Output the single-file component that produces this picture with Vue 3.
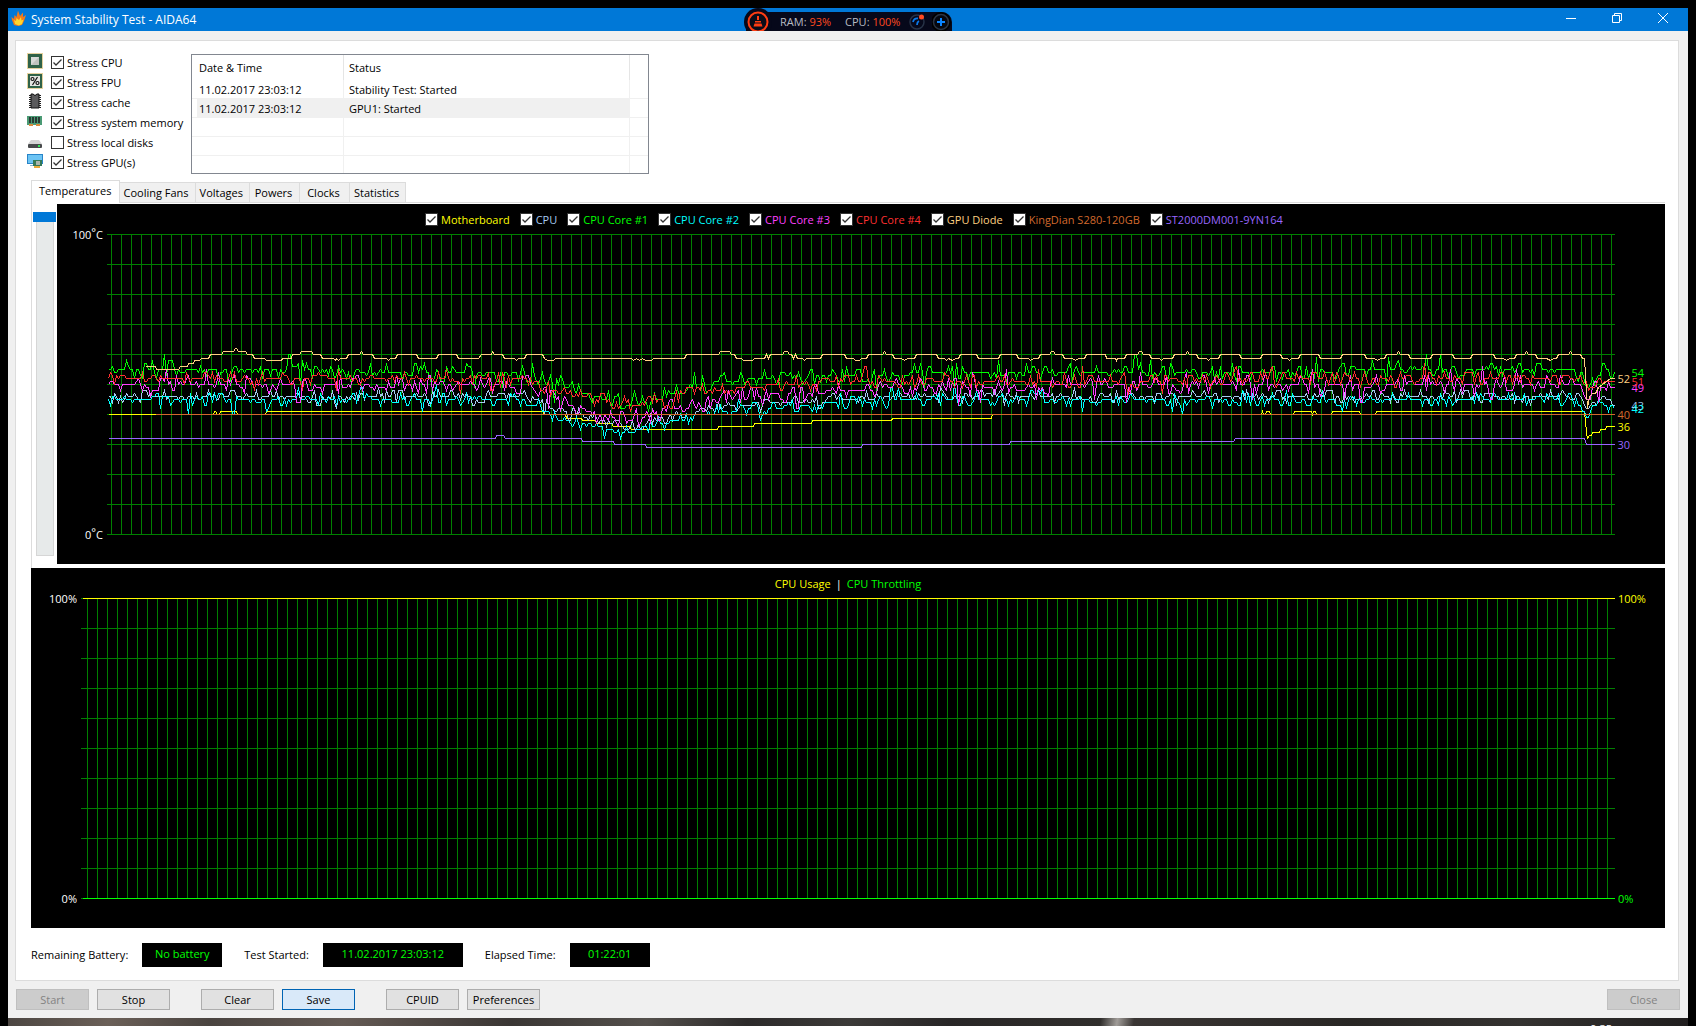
<script setup>
import { reactive, ref } from 'vue'

const stress = reactive([
  { id: 'cpu', label: 'Stress CPU', on: true },
  { id: 'fpu', label: 'Stress FPU', on: true },
  { id: 'cache', label: 'Stress cache', on: true },
  { id: 'mem', label: 'Stress system memory', on: true },
  { id: 'disk', label: 'Stress local disks', on: false },
  { id: 'gpu', label: 'Stress GPU(s)', on: true }
])

const log = [
  { time: '11.02.2017 23:03:12', status: 'Stability Test: Started' },
  { time: '11.02.2017 23:03:12', status: 'GPU1: Started' },
  {}, {}, {}
]

const tabs = ['Temperatures', 'Cooling Fans', 'Voltages', 'Powers', 'Clocks', 'Statistics']
const activeTab = ref('Temperatures')
const scroll = ref(100)

const PLOT_W = 1508
const LEFT = 107
const vLines = Array.from({ length: 151 }, (_, i) => 4 + i * 10)
const vLinesUsage = Array.from({ length: 153 }, (_, i) => 6 + i * 10)
const hLines = Array.from({ length: 11 }, (_, i) => i * 30)

const px = (x) => x - LEFT + 0.5
const py = (t) => Math.round(300 - t * 3) + 0.5

// "x:temp" pairs, whitespace separated
function track(text) {
  return text.trim().split(/\s+/).map((p) => {
    const [x, t] = p.split(':').map(Number)
    return `${px(x)},${py(t)}`
  }).join(' ')
}

// Sensor jitter around a piecewise-linear baseline
function jitter(seed, base, spread) {
  let s = seed
  const rnd = () => {
    s = (s * 1664525 + 1013904223) % 4294967296
    return s / 4294967296
  }
  const knots = base.trim().split(/\s+/).map((p) => p.split(':').map(Number))
  const at = (x) => {
    for (let i = 1; i < knots.length; i++) {
      if (x <= knots[i][0]) {
        const [x0, a] = knots[i - 1]
        const [x1, b] = knots[i]
        return a + (b - a) * (x - x0) / (x1 - x0)
      }
    }
    return knots[knots.length - 1][1]
  }
  const out = []
  let off = 0
  for (let x = 108; x <= 1612; x += 2) {
    const r = rnd()
    if (r < 0.3) off = 0
    else if (r < 0.76) off = Math.round((rnd() - 0.5) * spread)
    else if (r < 0.84) off = Math.round((rnd() - 0.5) * spread * 2)
    out.push(`${px(x)},${py(Math.round(at(x) + off))}`)
  }
  out.push(`${px(1614)},${py(knots[knots.length - 1][1])}`)
  return out.join(' ')
}

const gold = `145:56 155:56 156:55 178:55 180:56 187:56 188:57 193:57 194:58 199:58 201:58.7 208:58.7 210:60 221:60 223:61 233:61 235:62 236:62 238:61 245:61 247:60 252:60 254:58.7 264:58.7 266:58 281:58 282:58.7 291:58.7 292:60 299:60 301:61 311:61 313:60 320:60 322:58.7 333:58.7 335:58 336:58.7 338:58 340:58.7 346:58.7 348:60 359:60 361:61 363:60 372:60 374:58.7 386:58.7 388:58 390:58.7 395:58.7 397:60 416:60 418:58.7 436:58.7 438:60 456:60 458:58.7 478:58.7 481:60 491:60 492:61 494:60 502:60 504:58.7 514:58.7 516:58 518:58.7 524:58.7 526:60 542:60 544:58.7 547:58 553:58 555:58.7
631:58.7 633:58 636:58.7 639:58 642:58.7 645:58 651:58 653:58.7 684:58.7 686:60 718:60 720:61 729:61 731:60 734:60 736:58.7 741:58.7 743:58 752:58 754:58.7 764:58.7 766:60 768:58.7 770:60 782:60 784:61 787:61 789:60 791:60 793:58.7 795:60 797:58.7 802:58.7 804:58 806:58.7 820:58.7 822:60 844:60 846:58.7 853:58.7 855:58 859:58 861:58.7 866:58.7 868:60 882:60 884:61 886:60 892:60 894:58.7 901:58.7 904:58 907:58.7 914:58.7 916:60 936:60 938:58.7 944:58.7 946:58 948:58.7 952:58 955:58.7 958:58.7 960:60 976:60 978:58.7 998:58.7 1000:60 1016:60 1018:58.7 1028:58.7 1030:58 1033:58.7 1038:58.7 1040:60 1049:60 1051:61 1053:61 1055:60 1062:60 1064:58.7 1072:58.7 1075:58 1078:58.7 1084:58.7 1086:60 1105:60
1106:58.7 1115:58.7 1116:58 1117:58.7 1124:58.7 1126:60 1137:60 1139:61 1141:61 1143:60 1149:60 1151:58.7 1159:58.7 1161:58 1163:58.7 1172:58.7 1174:60 1185:60 1187:61 1189:60 1196:60 1198:58.7 1206:58.7 1208:58 1210:58.7 1218:58.7 1220:60 1239:60 1241:58.7 1260:58.7 1262:60 1280:60 1282:58.7 1287:58.7 1289:58 1291:58.7 1298:58.7 1300:60 1318:60 1320:58.7 1340:58.7 1342:60 1364:60 1366:58.7 1374:58.7 1377:58 1380:58.7 1384:58.7 1386:60 1396:60 1398:61 1400:60 1408:60 1410:58.7 1430:58.7 1432:60 1452:60 1454:58.7 1470:58.7 1472:60 1493:60 1495:58.7 1503:58.7 1506:58 1509:58.7 1514:58.7 1516:60 1524:60 1526:61 1528:60 1535:60 1537:58.7 1546:58.7 1550:58 1553:58.7 1556:58.7 1558:60 1568:60 1570:61 1572:60 1580:60 1582:58.7 1584:58.7 1587:42 1589:46 1592:47 1595:47 1598:49 1602:50 1606:51 1610:52 1614:52`

const yellow = `108:40 213:40 214:41 215:41 217:40 219:40 220:41 236:41 237:40 265:40 266:41 542:41 544:40 565:40 566:38.7 581:38.7 582:38 595:38 596:37 611:37 613:36 629:36 631:35 717:35 718:36 753:36 754:37 811:37 812:38 891:38 892:38.7 991:38.7 992:40 1261:40 1262:41 1263:40 1265:40 1266:41 1269:41 1270:40 1293:40 1294:41 1311:41 1312:40 1313:41 1315:41 1316:40 1331:40 1332:41 1359:41 1360:40 1375:40 1376:41 1584:41 1586:34 1587:32 1589:33 1591:33 1592:34 1599:34 1600:35 1605:35 1606:36 1614:36`

const purple = `108:32 495:32 496:33 503:33 505:32 581:32 582:31 613:31 614:30 645:30 646:29 861:29 862:30 1009:30 1010:31 1233:31 1235:32 1584:32 1586:30 1614:30`

const sensors = reactive([
  { label: 'Motherboard', color: '#ffff00', on: true, now: 36, points: track(yellow) },
  { label: 'CPU', color: '#a6caf0', on: true, now: 43, outer: true,
    points: jitter(11, '108:46 530:46 560:41 600:38 630:36 660:39 700:41 730:43 800:44 900:46 1580:46 1587:41 1592:44 1604:46 1615:43', 4) },
  { label: 'CPU Core #1', color: '#00ff00', on: true, now: 54, outer: true,
    points: jitter(29, '108:55 530:54 545:51 565:49 585:47 630:43 650:44 680:48 720:51 760:52 860:53 960:54 1100:54 1580:55 1587:49 1592:52 1615:54', 6) },
  { label: 'CPU Core #2', color: '#00ffff', on: true, now: 42, outer: true,
    points: jitter(47, '108:45 530:45 560:38 600:36 625:34 660:37 700:40 730:41 800:43 900:45 1580:45 1587:38 1592:43 1604:44 1615:42', 5) },
  { label: 'CPU Core #3', color: '#ff40ff', on: true, now: 49, outer: true,
    points: jitter(61, '108:50 530:50 545:47 560:44 600:40 630:38 660:41 700:44 730:46 800:47 900:49 1000:49 1100:50 1580:50 1587:45 1592:49 1615:49', 6) },
  { label: 'CPU Core #4', color: '#ff3030', on: true, now: 51, outer: true,
    points: jitter(83, '108:52 530:52 545:49 560:47 600:45 635:43 660:45 680:47 720:48 780:50 860:51 1580:52 1587:49 1592:50 1615:51', 5) },
  { label: 'GPU Diode', color: '#ffd080', on: true, now: 52, points: track(gold) },
  { label: 'KingDian S280-120GB', color: '#d2692d', on: true, now: 40, points: track('155:40 1614:40') },
  { label: 'ST2000DM001-9YN164', color: '#9966ff', on: true, now: 30, points: track(purple) }
])

const labelTop = (t) => ({ top: 331 - t * 3 + 'px' })
</script>

<template>
  <div class="desktop">
    <main class="window">
      <header class="titlebar">
        <svg class="flame" viewBox="0 0 16 16" width="16" height="16">
          <path d="M3 15 1 10l-.5-3L3 9l.5-4L5.500 7 7 .5 9 6l3-3.500L12 7l3-2-2 6-2 4-4 1z" fill="#f47a18" />
          <path d="M4 14 3 10l2 1 .5-3L8 10l2-3 .5 3.500 2-1L11 14l-3 1.500z" fill="#ffd82e" />
        </svg>
        <h1>System Stability Test - AIDA64</h1>
        <div class="gadget">
          <svg class="gadget-clean" viewBox="0 0 28 24" width="28" height="24">
            <circle cx="14" cy="14" r="14" fill="#06081a" />
            <circle cx="14" cy="14" r="9.500" fill="#0a0c18" stroke="#ff3d12" stroke-width="2" />
            <path d="M13 8h2v4h-2zM11 13h6v1.500h-6zM10.500 15.500h7l1 3h-9z" fill="#ff3d12" />
          </svg>
          <span class="meter">RAM: <b>93%</b></span>
          <span class="meter">CPU: <b>100%</b></span>
          <svg class="gadget-dial" viewBox="0 0 18 18" width="18" height="18">
            <circle cx="8" cy="9" r="7" fill="none" stroke="#263246" stroke-width="1.500" />
            <path d="M4 9q1-4 5-3.500M8 12q0-3 2-4" fill="none" stroke="#0a78e8" stroke-width="1.800" />
            <circle cx="12.500" cy="4" r="2.500" fill="#ff4a20" />
          </svg>
          <svg class="gadget-plus" viewBox="0 0 20 19" width="20" height="19">
            <circle cx="9" cy="10" r="10" fill="#000" />
            <circle cx="9" cy="10" r="7.500" fill="#05070f" stroke="#2b3444" stroke-width="1.500" />
            <path d="M9 6v8M5 10h8" stroke="#0a84ff" stroke-width="2" />
          </svg>
        </div>
        <div class="controls">
          <button aria-label="Minimize"><svg viewBox="0 0 10 10" width="10" height="10"><path d="M0 5.500h10" stroke="#fff" /></svg></button>
          <button aria-label="Restore"><svg viewBox="0 0 10 10" width="10" height="10"><path d="M.5 2.500h7v7h-7zM2.500 2V.5h7v7H8" fill="none" stroke="#fff" /></svg></button>
          <button aria-label="Close window"><svg viewBox="0 0 10 10" width="10" height="10"><path d="m0 0 10 10M10 0 0 10" stroke="#fff" /></svg></button>
        </div>
      </header>

      <section class="panel">
        <div class="top">
          <ul class="stress">
            <li v-for="s in stress" :key="s.id">
              <svg viewBox="0 0 16 16" width="16" height="16">
                <template v-if="s.id === 'cpu' || s.id === 'fpu'">
                  <rect x=".5" y=".5" width="15" height="15" fill="none" stroke="#c9a23c" stroke-dasharray="1 1" />
                  <rect x="1" y="1" width="14" height="14" fill="#2f6248" />
                  <rect v-if="s.id === 'cpu'" x="4" y="4" width="8" height="8" fill="#d8dad8" />
                  <path v-if="s.id === 'cpu'" d="M4 12 12 4v8z" fill="#bfc3bf" />
                  <rect v-if="s.id === 'fpu'" x="3" y="3" width="10" height="10" fill="#e4e6e2" />
                  <g v-if="s.id === 'fpu'" fill="none" stroke="#111" stroke-width="1.200">
                    <path d="m5.500 12 5-8" /><circle cx="5.500" cy="6" r="1.500" /><circle cx="10.500" cy="10" r="1.500" />
                  </g>
                </template>
                <template v-else-if="s.id === 'cache'">
                  <path d="M2 2.500h12M2 4.500h12M2 6.500h12M2 8.500h12M2 10.500h12M2 12.500h12M2 14.500h12" stroke="#222" />
                  <path d="M4 1h2l2 1.500L10 1h2v14H4z" fill="#5a5a5c" stroke="#111" />
                </template>
                <template v-else-if="s.id === 'mem'">
                  <rect x="0" y="3" width="15" height="9" fill="#4a9a74" />
                  <path d="M2 4h2v6H2zM5 4h2v6H5zM8 4h2v6H8zM11 4h2v6h-2z" fill="#2a3a34" />
                  <path d="M2 11h4v2H2zM9 11h4v2H9z" fill="#d98a3c" />
                </template>
                <template v-else-if="s.id === 'disk'">
                  <path d="M4 7h8l3 4H1z" fill="#d4d4d4" />
                  <rect x="1" y="11" width="14" height="4" rx="1" fill="#484a4c" />
                  <rect x="11" y="12" width="2" height="2" fill="#35e85a" />
                </template>
                <template v-else>
                  <rect x=".5" y="1.500" width="15" height="9" fill="#6cc4f4" stroke="#2884c8" />
                  <path d="M3 12h4v1H3z" fill="#8ab4cc" />
                  <rect x="6" y="7" width="9" height="6" fill="#357a58" />
                  <rect x="9" y="8" width="4" height="4" fill="#a8b4ac" />
                  <path d="M7 13h6v2H7z" fill="#e8a838" />
                </template>
              </svg>
              <label><input v-model="s.on" type="checkbox">{{ s.label }}</label>
            </li>
          </ul>

          <table class="log">
            <thead>
              <tr><th>Date &amp; Time</th><th>Status</th><th class="rest"></th></tr>
            </thead>
            <tbody>
              <tr v-for="(row, i) in log" :key="i" :class="{ selected: i === 1 }">
                <td>{{ row.time }}</td><td>{{ row.status }}</td><td class="rest"></td>
              </tr>
            </tbody>
          </table>
        </div>

        <nav class="tabs">
          <button v-for="t in tabs" :key="t" :class="{ active: t === activeTab }" @click="activeTab = t">{{ t }}</button>
        </nav>

        <div class="page">
          <input v-model="scroll" class="zoomer" type="range" min="0" max="100" aria-label="Vertical scale">
          <section class="chart temps">
            <div class="legend">
              <label v-for="s in sensors" :key="s.label" :style="{ color: s.color }"><input v-model="s.on" type="checkbox">{{ s.label }}</label>
            </div>
            <div class="axis"><span>100<sup>°</sup>C</span><span>0<sup>°</sup>C</span></div>
            <svg class="plot" :viewBox="`0 0 ${PLOT_W} 301`" preserveAspectRatio="none">
              <g stroke="#008000" shape-rendering="crispEdges">
                <line v-for="y in hLines" :key="'h' + y" x1="0" :x2="PLOT_W" :y1="y + 0.5" :y2="y + 0.5" />
                <line v-for="x in vLines" :key="'v' + x" :x1="x + 0.5" :x2="x + 0.5" y1="0" y2="301" />
              </g>
              <g fill="none" shape-rendering="crispEdges">
                <template v-for="s in sensors" :key="s.label">
                  <polyline v-if="s.on" :points="s.points" :stroke="s.color" />
                </template>
              </g>
            </svg>
            <div class="readings">
              <span v-for="s in sensors" :key="s.label" :class="{ outer: s.outer }" :style="[labelTop(s.now), { color: s.color }]">{{ s.now }}</span>
            </div>
          </section>
        </div>

        <section class="chart usage">
          <div class="legend"><span class="yellow">CPU Usage</span><span>|</span><span class="lime">CPU Throttling</span></div>
          <div class="axis"><span>100%</span><span>0%</span></div>
          <svg class="plot" viewBox="0 0 1534 301" preserveAspectRatio="none">
            <g stroke="#008000" shape-rendering="crispEdges">
              <line v-for="y in hLines" :key="'h' + y" x1="0" x2="1534" :y1="y + 0.5" :y2="y + 0.5" />
              <line v-for="x in vLinesUsage" :key="'v' + x" :x1="x + 0.5" :x2="x + 0.5" y1="0" y2="301" />
              <line x1="2" x2="1534" y1=".5" y2=".5" stroke="#ffff00" />
              <line x1="2" x2="1534" y1="300.5" y2="300.5" stroke="#00ff00" />
            </g>
          </svg>
          <div class="axis right"><span class="yellow">100%</span><span class="lime">0%</span></div>
        </section>

        <dl class="status">
          <dt>Remaining Battery:</dt><dd>No battery</dd>
          <dt>Test Started:</dt><dd class="wide">11.02.2017 23:03:12</dd>
          <dt>Elapsed Time:</dt><dd>01:22:01</dd>
        </dl>
      </section>

      <footer class="actions">
        <div class="pair"><button disabled>Start</button><button>Stop</button></div>
        <div class="pair"><button>Clear</button><button class="focus">Save</button></div>
        <div class="pair"><button>CPUID</button><button>Preferences</button></div>
        <button class="close" disabled>Close</button>
      </footer>
    </main>
    <div class="wallpaper"><span>9:35</span></div>
  </div>
</template>

<style>
body { background: #000; }
</style>

<style scoped>
.desktop {
  display: flex;
  flex-direction: column;
  min-height: 100vh;
  padding-top: 8px;
  box-sizing: border-box;
  font: 11px/14px "Open Sans", "Noto Sans", sans-serif;
  color: #000;
}
.desktop * { box-sizing: border-box; }
button, input { font: inherit; margin: 0; padding: 0; }
svg { display: block; flex: none; }

.window { margin: 0 8px; background: #f0f0f0; }

.titlebar {
  position: relative;
  display: flex;
  height: 23px;
  align-items: center;
  background: #0078d7;
  color: #fff;
  overflow: hidden;
}
.flame { margin: 0 4px 4px 3px; }
h1 { margin: 0; font: inherit; font-size: 12px; }
.gadget {
  position: absolute;
  left: 50%;
  top: 4px;
  display: flex;
  align-items: flex-start;
  width: 206px;
  height: 19px;
  margin-left: -102px;
  background: #06081a;
  border-radius: 12px 10px 0 0;
  color: #b8bcc4;
}
.gadget-clean { margin: -4px 8px 0 -2px; }
.meter { line-height: 20px; margin-right: 14px; white-space: nowrap; }
.meter b { font-weight: 400; color: #ff4a20; }
.gadget-dial { position: absolute; right: 25px; top: 1px; }
.gadget-plus { position: absolute; right: 0; top: 0; }
.controls { display: flex; margin-left: auto; height: 100%; }
.controls button {
  display: grid;
  place-items: center;
  width: 46px;
  height: 20px;
  border: 0;
  background: none;
}
.controls button:last-child { margin-right: 2px; }

.panel {
  margin: 9px 9px 0 7px;
  padding: 11px 13px 13px 11px;
  background: #fff;
  border: 1px solid #dcdcdc;
}
.top { display: flex; }
.stress { width: 164px; margin: 0; padding: 0; list-style: none; }
.stress li { display: flex; height: 20px; padding-top: 1px; }
.stress label { display: flex; gap: 3px; margin: 3px 0 0 8px; white-space: nowrap; line-height: 13px; }
input[type="checkbox"] {
  appearance: none;
  flex: none;
  width: 13px;
  height: 13px;
  border: 1px solid #333;
  background: #fff;
}
input[type="checkbox"]:checked {
  background: #fff url("data:image/svg+xml,%3Csvg xmlns='http://www.w3.org/2000/svg' viewBox='0 0 11 11'%3E%3Cpath d='M1.500 5.500 4 8l5.500-5.500' fill='none' stroke='%23333' stroke-width='1.300'/%3E%3C/svg%3E") center / 11px;
}

.log {
  width: 458px;
  height: 120px;
  margin-top: 2px;
  border: 1px solid #828790;
  border-spacing: 0;
  table-layout: fixed;
}
.log th, .log td {
  height: 19px;
  padding: 0 0 0 7px;
  border: solid #f0f0f0;
  border-width: 0 1px 1px 0;
  text-align: left;
  font-weight: 400;
  line-height: 16px;
}
.log td { padding-top: 2px; }
.log th { height: 25px; width: 152px; border-bottom: 0; border-color: #e5e5e5; }
.log th:nth-child(2) { width: 286px; }
.log td:nth-child(2), .log th:nth-child(2) { padding-left: 5px; }
.log .rest { width: auto; border-right: 0; padding: 0; }
.log tr:last-child td { height: 17px; border-bottom: 0; }
.log .selected td { background: #f0f0f0; }
.log .selected td:first-child { background: linear-gradient(to right, #fff 5px, #f0f0f0 5px); }
.log .selected .rest { background: #fff; }

.tabs { display: flex; align-items: flex-end; height: 22px; margin: 6px 0 0 4px; }
.tabs button {
  min-width: 50px;
  height: 20px;
  padding: 0 6px 0 4px;
  border: 1px solid #dcdcdc;
  border-width: 1px 1px 0 0;
  background: #f0f0f0;
  color: #000;
}
.tabs .active {
  position: relative;
  height: 23px;
  margin-bottom: -1px;
  padding: 0 7px 3px;
  border-left-width: 1px;
  background: #fff;
}
.page {
  display: flex;
  margin-left: 4px;
  padding: 1px 0 4px 2px;
  border: 1px solid #dcdcdc;
  border-width: 1px 0 0 1px;
}
.zoomer {
  appearance: none;
  writing-mode: vertical-lr;
  direction: rtl;
  width: 23px;
  height: 344px;
  margin: 8px 1px 0 -1px;
  background: linear-gradient(#e7eaea, #e7eaea) center / 16px 342px no-repeat, linear-gradient(#d6d6d6, #d6d6d6) center / 18px 344px no-repeat;
}
.zoomer::-webkit-slider-thumb { appearance: none; width: 23px; height: 10px; background: #0078d7; }

.chart {
  position: relative;
  flex: 1;
  display: grid;
  grid-template: 30px 330px / 50px minmax(0, 1fr) 50px;
  background: #000;
  color: #fff;
}
.legend {
  grid-column: 1 / -1;
  display: flex;
  justify-content: center;
  gap: 5px;
  height: 22px;
  padding-top: 9px;
  line-height: 13px;
}
.temps .legend { gap: 10px; padding-right: 14px; }
.legend label { display: flex; gap: 3px; white-space: nowrap; }
.plot { width: 100%; height: 301px; }
.axis {
  display: flex;
  flex-direction: column;
  justify-content: space-between;
  height: 314px;
  margin-top: -6px;
  padding-right: 4px;
  text-align: right;
}
.axis.right { padding-left: 3px; text-align: left; }
.axis sup { font-size: 11px; line-height: 0; vertical-align: 3px; }
.readings span { position: absolute; right: 35px; line-height: 14px; margin-top: -7px; }
.readings .outer { right: 21px; }

.usage { margin-left: 4px; }
.yellow { color: #ffff00; }
.lime { color: #00ff00; }

.status { display: flex; align-items: center; margin: 15px 0 0 4px; }
.status dt { margin-right: 14px; white-space: nowrap; }
.status dd {
  width: 80px;
  height: 24px;
  margin: 0 22px 0 0;
  background: #000;
  color: #00ff00;
  line-height: 22px;
  text-align: center;
}
.status .wide { width: 140px; }

.actions { display: flex; gap: 31px; padding: 8px; }
.pair { display: flex; gap: 8px; }
.actions button {
  width: 73px;
  height: 21px;
  border: 1px solid #adadad;
  background: #e1e1e1;
  color: #000;
}
.actions button:disabled { background: #ccc; border-color: #bfbfbf; color: #838383; }
.actions .focus { background: #d9e9f9; border-color: #0064b4; }
.actions .close { margin-left: auto; }

.wallpaper {
  flex: 1 0 8px;
  height: 8px;
  margin: 0 8px;
  overflow: hidden;
  background: linear-gradient(100deg, #4c4642, #6b6058 6%, #4a4440 12%, #645a54 20%, #3a3634 30%, #54504c 38%, #2c2a2a 44%, #3c3a38 50%, #282626 56%, #302e2c 65%, #a09c98 66%, #3a3634 67%, #282624 80%, #343230 90%, #201e1e);
}
.wallpaper span { display: block; margin: 4px 76px 0 0; color: #fff; text-align: right; }
</style>
